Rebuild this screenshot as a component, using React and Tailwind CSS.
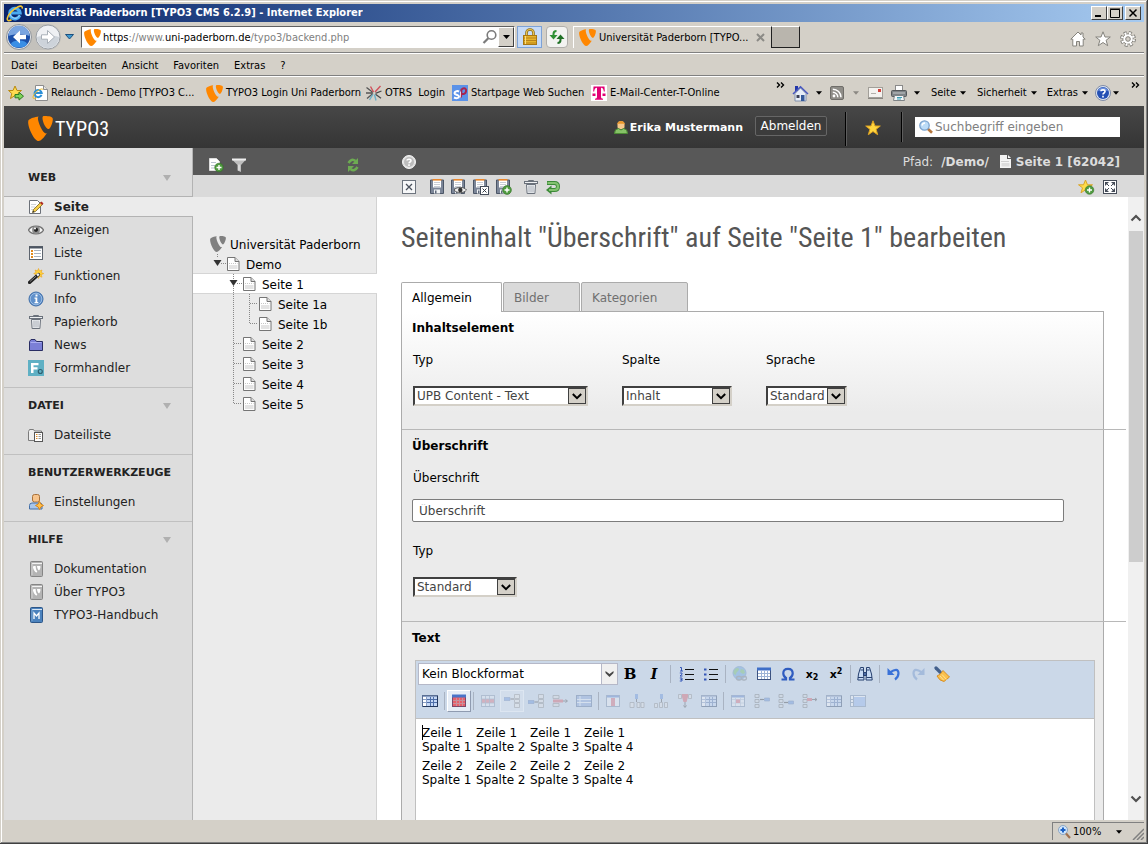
import React from "react";
import { SiTypo3 } from "react-icons/si";

/* ---------- shared helpers ---------- */

function Svg({ w = 16, h = 16, box, className = "", children }) {
  return (
    <svg
      width={w}
      height={h}
      viewBox={box || `0 0 ${w} ${h}`}
      fill="none"
      aria-hidden="true"
      className={"block shrink-0 " + className}
    >
      {children}
    </svg>
  );
}

function Caret({ color = "#000", w = 7, className = "" }) {
  return (
    <Svg w={w} h={4} box="0 0 7 4" className={className}>
      <path d="M0 0h7L3.5 4z" fill={color} />
    </Svg>
  );
}

/* ---------- browser icons ---------- */

function IeLogo({ s = 18 }) {
  return (
    <Svg w={s} h={s} box="0 0 18 18">
      <path
        d="M13.8 11.4A5.2 5.2 0 1 1 14.1 9H5.2"
        stroke="#49aaf0"
        strokeWidth="3.2"
      />
      <path
        d="M13.6 11.2A5 5 0 0 1 4 9.5"
        stroke="#a8defc"
        strokeWidth="1"
      />
      <path
        d="M16.3 4.6c.4-2.6-1.300-3.200-4.600-1.700C7 5 2 10.500 1.300 14.300c-.5 2.600 1.200 3 4.200 1.500"
        stroke="#f5c731"
        strokeWidth="1.600"
      />
    </Svg>
  );
}

function BackButton() {
  return (
    <Svg w={26} h={26}>
      <circle cx="13" cy="13" r="12.500" fill="#e4e6ea" stroke="#8f9499" />
      <circle cx="13" cy="13" r="11" fill="#1b4fa8" />
      <path d="M2.500 12a10.500 10.500 0 0 1 21 0c-5-2.500-16-2.500-21 0z" fill="#7aa5e0" />
      <ellipse cx="13" cy="20" rx="8" ry="3.500" fill="#3a8fe6" />
      <path d="M14 6.500 7 13l7 6.500v-4.300h6v-4.400h-6z" fill="#fff" />
    </Svg>
  );
}

function ForwardButton() {
  return (
    <Svg w={26} h={26}>
      <circle cx="13" cy="13" r="12" fill="#eef0f3" stroke="#9ba0a6" />
      <path d="M2 13a11 11 0 0 0 22 0c-6-2-16-2-22 0z" fill="#cdd3da" />
      <path
        d="m12.500 6.500 7 6.500-7 6.500v-4.300h-6v-4.400h6z"
        fill="#fff"
        stroke="#a9b0b8"
      />
    </Svg>
  );
}

function Lens() {
  return (
    <Svg w={16} h={16}>
      <circle cx="9.500" cy="6" r="4.300" stroke="#7b7b7b" strokeWidth="1.600" />
      <path d="M6.300 9.200 1.500 14" stroke="#7b7b7b" strokeWidth="2.200" />
    </Svg>
  );
}

function Padlock() {
  return (
    <Svg w={16} h={18}>
      <path d="M4.500 8V5a3.500 3.500 0 0 1 7 0v3" stroke="#8a6a14" strokeWidth="2.600" />
      <path d="M4.500 8V5a3.500 3.500 0 0 1 7 0v3" stroke="#e8c452" strokeWidth="1.200" />
      <rect x="1.500" y="7.500" width="13" height="9" fill="#e6b32c" stroke="#a87712" />
      <path d="M2 10h12M2 12.500h12M2 15h12" stroke="#b98319" />
      <path d="M3.500 8v8" stroke="#f8de83" />
    </Svg>
  );
}

function Reload() {
  return (
    <Svg w={16} h={16}>
      <path d="M7.500 2Q4.500 2 4.500 5v2" stroke="#2f9034" strokeWidth="2" />
      <path d="M.5 6h8l-4 4.500z" fill="#2f9034" />
      <path d="M8.500 14Q11.500 14 11.500 11V9" stroke="#1f7025" strokeWidth="2" />
      <path d="M7.500 10h8l-4-4.500z" fill="#1f7025" />
    </Svg>
  );
}

function HomeOutline() {
  return (
    <Svg w={16} h={16}>
      <path
        d="M8 1 .8 8.200h2V15h3.700v-4.500h3V15h3.700V8.200h2L13 6V2h-2v2z"
        fill="#fff"
        stroke="#85837d"
      />
    </Svg>
  );
}

function StarShape({ fill = "#fff", stroke = "#85837d", s = 16 }) {
  return (
    <Svg w={s} h={s} box="0 0 16 16">
      <path
        d="M8 .8 10 6h5.300l-4.200 3.300 1.600 5.400L8 11.500l-4.700 3.200 1.600-5.400L.7 6H6z"
        fill={fill}
        stroke={stroke}
      />
    </Svg>
  );
}

function GearOutline() {
  return (
    <Svg w={16} h={16}>
      <circle cx="8" cy="8" r="6" stroke="#85837d" strokeWidth="4" strokeDasharray="2.800 1.912" />
      <circle cx="8" cy="8" r="5.200" fill="#fff" stroke="#85837d" strokeWidth="1" />
      <circle cx="8" cy="8" r="5.800" stroke="#fff" strokeWidth="2.400" strokeDasharray="1.800 2.755" strokeDashoffset="-.4" />
      <circle cx="8" cy="8" r="2.300" fill="#d4d0c8" stroke="#85837d" />
    </Svg>
  );
}

function FavAdd() {
  return (
    <Svg w={16} h={16}>
      <path d="M7 1l2 4.500h4.500L10 8.500l1.500 5L7 10.500l-4.500 3 1.300-5L.5 5.500H5z" fill="#ffdc50" stroke="#b98a12" />
      <path d="M7 9.500h4V7.300l4.500 3.900-4.500 3.900v-2.300H7z" fill="#7fd35a" stroke="#2d7d22" />
    </Svg>
  );
}

function IePage() {
  return (
    <Svg w={16} h={16}>
      <path d="M3.500.5h8l4 4v11h-12z" fill="#fff" stroke="#8d8d8d" />
      <path d="M11.500.5v4h4" fill="#e4e4e4" stroke="#8d8d8d" />
      <path d="M9.500 9.800A3.600 3.600 0 1 1 9.700 8H3" stroke="#2b8fd8" strokeWidth="2" />
      <path d="M11 4.500C10 2 1 8 1 12.500c0 1.500 2 1.300 3.500.3" stroke="#f0bd2a" />
    </Svg>
  );
}

function OtrsIcon() {
  return (
    <Svg w={16} h={16}>
      <path d="M.5 2.500 7 7.500M1 13.500l6-5M0 8h6" stroke="#555" strokeWidth="1.300" />
      <path d="M4.500 1.500 7.500 7M9 7l5.500-6" stroke="#d0505a" strokeWidth="1.400" />
      <path d="M9.500 8.300 15.500 6M9.500 9.300l5.500 4" stroke="#4a4a4a" strokeWidth="1.300" />
      <path d="M8.500 9.500l1.500 6M6.800 9.500 3.500 15" stroke="#6ab0c8" strokeWidth="1.400" />
    </Svg>
  );
}

function StartpageIcon() {
  return (
    <Svg w={16} h={16}>
      <rect width="16" height="16" fill="#5b92e8" />
      <path d="M7 6.500C5 5.500 2.500 6.500 2.500 8.200S7 9.500 7 11.500s-3 2-5 1" stroke="#fff" strokeWidth="2" />
      <path d="M9 12.500 9.500 4.500C13 2 14.500 4 14 6.500S11 9.500 9.500 8.800" stroke="#a8254f" strokeWidth="2" />
      <path d="M8.500 12.500v-6" stroke="#fff" strokeWidth=".8" />
    </Svg>
  );
}

function TelekomIcon() {
  return (
    <Svg w={16} h={16}>
      <rect width="16" height="16" fill="#fff" />
      <path
        d="M2.500 1.500h11l.3 5h-1c-.2-2.300-1-3.500-2.800-3.700v8.700c0 1.600.5 2.200 2 2.300v.9H4v-.9c1.500-.1 2-.7 2-2.300V2.800C4.200 3 3.400 4.200 3.200 6.500h-1z"
        fill="#e20074"
      />
      <path d="M1.500 8.500h3v2.500h-3zM11.500 8.500h3v2.500h-3z" fill="#e20074" />
    </Svg>
  );
}

function HomeBlue() {
  return (
    <Svg w={17} h={17}>
      <rect x="3" y="1" width="3" height="5" fill="#2336a8" />
      <path d="M3 8.500V16h11V8.500L8.500 3z" fill="#e6edf7" stroke="#8190ac" />
      <path d="M1 9 8.500 1.800 16 9" stroke="#4858c0" strokeWidth="1.500" />
      <rect x="9" y="10" width="3.500" height="6" fill="#34599a" />
      <rect x="4.500" y="10" width="3" height="3" fill="#3a3f55" />
    </Svg>
  );
}

function RssIcon() {
  return (
    <Svg w={14} h={14}>
      <rect x=".5" y=".5" width="13" height="13" rx="1.500" fill="#8f8d88" stroke="#6f6d69" />
      <circle cx="4" cy="10" r="1.400" fill="#fff" />
      <path d="M2.800 6.300a5 5 0 0 1 5 5M2.800 3.200a8.200 8.200 0 0 1 8.200 8.100" stroke="#fff" strokeWidth="1.500" />
    </Svg>
  );
}

function MailIcon() {
  return (
    <Svg w={15} h={12}>
      <rect x=".5" y=".5" width="14" height="10" fill="#f4f2ef" stroke="#a29f99" />
      <path d="M0 11.500h15" stroke="#8b8883" />
      <rect x="10" y="2" width="3" height="3" fill="#d2413a" />
      <path d="M3 6.500h5" stroke="#b3b0ab" />
    </Svg>
  );
}

function PrinterIcon() {
  return (
    <Svg w={16} h={16}>
      <rect x="4.500" y=".5" width="7" height="6" fill="#fdfdfd" stroke="#8a8a8a" />
      <rect x=".5" y="5.500" width="15" height="6" rx="1" fill="#7e8386" stroke="#54585b" />
      <path d="M2 8h12" stroke="#c4c8ca" />
      <path d="M3.500 10.500h9l1 5h-11z" fill="#f1f6f8" stroke="#7e8386" />
      <path d="M6 12.500h5M6 14h4" stroke="#3d9fb4" />
    </Svg>
  );
}

function HelpBlue() {
  return (
    <Svg w={16} h={16}>
      <circle cx="8" cy="8" r="7.500" fill="#dfe6f2" stroke="#7e8ba6" />
      <circle cx="8" cy="8" r="6" fill="#2450b4" />
      <path d="M3 6a5.300 5.300 0 0 1 10 0c-3-1-7-1-10 0z" fill="#6f92dc" />
      <path d="M6 6.300C6 4.500 10 4.300 10 6.500 10 8 8 8 8 9.500M8 10.800v1.700" stroke="#fff" strokeWidth="1.600" />
    </Svg>
  );
}

function ZoomIcon() {
  return (
    <Svg w={13} h={14}>
      <circle cx="5" cy="5" r="4.500" fill="#cfe4fb" stroke="#8aa5c4" />
      <path d="M5 2.500v5M2.500 5h5" stroke="#1d62c4" strokeWidth="2" />
      <path d="m8 8.500 4 4.500" stroke="#a2714f" strokeWidth="2.200" />
    </Svg>
  );
}

/* ---------- backend icons ---------- */

function PageEdit() {
  return (
    <Svg w={16} h={16}>
      <path d="M1.500 1.500h8l3 3v10h-11z" fill="#fff" stroke="#6b7078" />
      <path d="M3 5.500h5M3 8h4M3 10.500h3" stroke="#cfd3d8" />
      <path d="m5.500 10.500 7-7 2 2-7 7-3 1z" fill="#f6cf4a" stroke="#7e6420" strokeWidth=".8" />
      <path d="m12 4 1.500-1.500 2 2L14 6z" fill="#b02a25" />
      <path d="m4.500 13.500.6-2 1.500 1.400z" fill="#333" />
    </Svg>
  );
}

function Eye() {
  return (
    <Svg w={16} h={12}>
      <path d="M.5 6C3 1 13 1 15.500 6 13 11 3 11 .5 6z" fill="#f2f2f2" stroke="#727272" strokeWidth="1.300" />
      <circle cx="8" cy="6" r="3.900" fill="#8d8d8d" />
      <circle cx="8" cy="5.800" r="2.100" fill="#222" />
      <circle cx="7" cy="4.500" r="1" fill="#fff" />
    </Svg>
  );
}

function ListIcon() {
  return (
    <Svg w={16} h={16}>
      <rect x="1.500" y="1.500" width="13" height="13" fill="#fff" stroke="#5d646e" />
      <path d="M1 2.500h14" stroke="#4d5663" strokeWidth="2" />
      <path d="M3 6h2M3 9h2M3 12h2" stroke="#e08a20" strokeWidth="2" />
      <path d="M6 5.500h7M6 8.500h7M6 11.500h7" stroke="#a9b3c0" />
    </Svg>
  );
}

function Wand() {
  return (
    <Svg w={16} h={16}>
      <path d="m10.500.5 1 2.500 2.500-1-.8 2.500 2.500 1-2.500 1.200.8 2.500-2.500-1-1 2.300-1.200-2.500L7 9l1-2.300-2.300-1.200L8 4.500 7 2l2.500 1z" fill="#ffd23c" stroke="#eda51c" strokeWidth=".6" />
      <path d="m1.500 14.500 9-8" stroke="#222" strokeWidth="3.200" strokeLinecap="round" />
      <path d="m2 13.500 6-5.300" stroke="#8d8d8d" strokeWidth=".9" />
      <path d="m9 7.500 1.800-1.600" stroke="#eee" strokeWidth="2.400" />
    </Svg>
  );
}

function InfoIcon() {
  return (
    <Svg w={16} h={16}>
      <circle cx="8" cy="8" r="7" fill="#5f90cb" stroke="#3c6ca8" />
      <circle cx="8" cy="8" r="5.800" stroke="#a9c8ea" strokeWidth=".8" />
      <path d="M7.500 3.500h2v2h-2zM6.500 6.500h2.800v4.500h1v1.300H6.500V11h1V7.800h-1z" fill="#fff" />
    </Svg>
  );
}

function Trash({ s = 16 }) {
  return (
    <Svg w={s} h={s} box="0 0 16 16">
      <path d="M5.500 2.500v-1h5v1" stroke="#6a717b" />
      <rect x="1.500" y="2.500" width="13" height="2" fill="#eef0f2" stroke="#6a717b" />
      <path d="M3.500 5.500h9l-.6 9H4.100z" fill="#f3f5f8" stroke="#6a717b" />
      <path d="M6 6.500v7M8 6.500v7M10 6.500v7" stroke="#8b929c" strokeWidth=".8" />
    </Svg>
  );
}

function Folder() {
  return (
    <Svg w={16} h={16}>
      <path d="M1.500 13.500V4.500L3 2.500h4l1.500 2h6v9z" fill="#7b7fd6" stroke="#292d63" />
      <path d="M2.500 5.500h11" stroke="#a9adf0" />
    </Svg>
  );
}

function FormIcon() {
  return (
    <Svg w={16} h={16}>
      <rect width="16" height="16" fill="#5fb0c4" />
      <path d="M3 3h7.500v2.200H5.500v2h4v2.200h-4V13H3z" fill="#fff" />
      <circle cx="12.300" cy="11.500" r="2" stroke="#2f6070" strokeWidth="1.200" />
    </Svg>
  );
}

function FileListIcon() {
  return (
    <Svg w={16} h={16}>
      <path d="M.5 13.500V4.500l1-2h4l1 1.500h7v9.500z" fill="#efefef" stroke="#7b7b7b" />
      <rect x="6.500" y="5.500" width="8" height="9" fill="#fff" stroke="#565656" />
      <path d="M8 7.500h1.500M8 9.500h1.500M8 11.500h1.500" stroke="#e08a20" />
      <path d="M10.500 7.500H13M10.500 9.500H13M10.500 11.500H13" stroke="#9a9a9a" />
    </Svg>
  );
}

function UserConfig() {
  return (
    <Svg w={16} h={16}>
      <rect x="4.500" y=".5" width="7" height="7.500" rx="2" fill="#f7c48c" stroke="#a8713a" />
      <path d="M1.500 15V11.500q0-2.500 2.500-2.500h8q2 0 2 2V15z" fill="#a9c6ea" stroke="#4470a8" />
      <path d="m11.500 7.500 1.400 2.600 2.600 1.400-2.600 1.400-1.400 2.600-1.400-2.600-2.600-1.400 2.600-1.400z" fill="#ffc04a" stroke="#d9861a" />
    </Svg>
  );
}

function Book({ blue }) {
  return (
    <Svg w={16} h={16}>
      <rect x="2.500" y=".5" width="12" height="15" rx="1" fill={blue ? "#4b82bd" : "#b4b4b4"} stroke={blue ? "#2d5688" : "#858585"} />
      <path d="M4 2.500h10" stroke={blue ? "#d8e6f4" : "#f4f4f4"} />
      <path d="M4 2.500V14" stroke={blue ? "#7fa9d4" : "#d5d5d5"} />
      {blue ? (
        <path d="M6 12V6l2.500 3L11 6v6" stroke="#fff" strokeWidth="1.300" />
      ) : (
        <path d="M5 5.500c1.500-.7 2.500-.5 2.800 0-.2 2 .6 4 1.500 5-.3.8-.7 1-1.200 1C6.600 10.700 4.800 7.500 5 5.500zM9 5h3.300c.5 1.700-.4 3.600-1.300 4.600C9.800 8.500 9 6.500 9 5z" fill="#fff" />
      )}
    </Svg>
  );
}

function PageAdd() {
  return (
    <Svg w={16} h={16}>
      <path d="M1.500 1.500h7l3 3v9h-10z" fill="#fff" stroke="#dcdcdc" />
      <path d="M3 5.500h5M3 8.500h4M3 11h3" stroke="#b9c2d0" />
      <circle cx="11" cy="10.500" r="4.300" fill="#4f9a3f" stroke="#2f6f24" strokeWidth=".6" />
      <path d="M11 8v5M8.500 10.500h5" stroke="#fff" strokeWidth="1.400" />
    </Svg>
  );
}

function Funnel() {
  return (
    <Svg w={14} h={16}>
      <path d="M0 2.500h14L9 8v7L5.500 13.500V8z" fill="#bdbdbd" />
      <path d="M0 1.500h14v2H0z" fill="#efefef" />
      <path d="M7 7.500v6" stroke="#f4f4f4" />
    </Svg>
  );
}

function RefreshGreen() {
  return (
    <Svg w={12} h={16}>
      <path d="M1.500 6Q4.500.8 8.500 4" stroke="#6dab52" strokeWidth="2.600" />
      <path d="M11 1v6H5z" fill="#6dab52" />
      <path d="M10.500 10Q7.500 15.200 3.500 12" stroke="#6dab52" strokeWidth="2.600" />
      <path d="M1 15V9h6z" fill="#6dab52" />
    </Svg>
  );
}

function HelpGrey() {
  return (
    <Svg w={14} h={14}>
      <circle cx="7" cy="7" r="6.500" fill="#e2e2e2" stroke="#f3f3f3" />
      <circle cx="7" cy="7" r="5" fill="#bcbcbc" />
      <path d="M5 5.600C5 3.700 9 3.700 9 5.700 9 7 7 7 7 8.300M7 9.300v1.600" stroke="#fff" strokeWidth="1.500" />
    </Svg>
  );
}

function CloseBox() {
  return (
    <Svg w={14} h={14}>
      <rect x=".5" y=".5" width="13" height="13" fill="#f6f7f8" stroke="#6d747e" />
      <path d="m4 4 6 6M10 4l-6 6" stroke="#4a515c" strokeWidth="1.300" />
    </Svg>
  );
}

function Save({ kind }) {
  return (
    <Svg w={16} h={16}>
      <path d="M.5 1v13.500h13V1z" fill="#7c8698" stroke="#4c5667" />
      <path d="M3 .5h8v8H3z" fill="#fff" />
      <path d="M2.500.8h9" stroke="#e9862a" strokeWidth="1.600" />
      <path d="M4 3.500h6M4 5.500h6M4 7.500h6" stroke="#bcc2cb" strokeWidth=".8" />
      <path d="M4 10.500h6v4H4z" fill="#f1f3f5" />
      <path d="M5 11.500h1.500v3H5z" fill="#5d6779" />
      {kind === "view" && (
        <>
          <path d="M3 11C5.500 7.500 13 7.500 15.500 11 13 14.500 5.500 14.500 3 11z" fill="#eee" stroke="#5e5e5e" />
          <circle cx="9.300" cy="11" r="2.200" fill="#333" />
        </>
      )}
      {kind === "close" && (
        <>
          <rect x="7.500" y="7.500" width="8" height="8" fill="#fff" stroke="#444c59" />
          <path d="m9.500 9.500 4 4M13.500 9.500l-4 4" stroke="#333a45" />
        </>
      )}
      {kind === "new" && (
        <>
          <circle cx="11" cy="11" r="4.400" fill="#4f9a3f" stroke="#347526" strokeWidth=".6" />
          <path d="M11 8.500v5M8.500 11h5" stroke="#fff" strokeWidth="1.400" />
        </>
      )}
    </Svg>
  );
}

function UndoGreen() {
  return (
    <Svg w={14} h={15}>
      <path d="M1 3h7.500Q12 3 12 6.500T8.500 10H4" stroke="#3c8a38" strokeWidth="4" />
      <path d="M5.500 5.500v9L0 10z" fill="#3c8a38" />
      <path d="M1.500 3h7Q12 3 12 6.500T8.500 10H3" stroke="#83c270" strokeWidth="2.200" />
    </Svg>
  );
}

function StarAdd() {
  return (
    <Svg w={17} h={16}>
      <path d="M7.500 1l2 4.800h5l-4 3 1.500 5-4.500-3-4.500 3 1.500-5-4-3h5z" fill="#ffdc4a" stroke="#d9a52a" />
      <circle cx="11.500" cy="11" r="4.300" fill="#4f9a3f" stroke="#347526" strokeWidth=".6" />
      <path d="M11.500 8.500v5M9 11h5" stroke="#fff" strokeWidth="1.400" />
    </Svg>
  );
}

function Expand() {
  return (
    <Svg w={14} h={14}>
      <rect x=".5" y=".5" width="13" height="13" fill="#fff" stroke="#454c58" />
      <path d="M2 6V2h4zM12 6V2H8zM2 8v4h4zM12 8v4H8z" fill="#444b57" />
      <path d="m3.500 3.500 2.500 2.500M10.500 3.500 8 6M3.500 10.500 6 8M10.500 10.500 8 8" stroke="#444b57" />
    </Svg>
  );
}

function UserGreen() {
  return (
    <Svg w={14} h={15}>
      <path d="M3.500 4c0-4 7-4 7 0v3c0 3-7 3-7 0z" fill="#f7c88d" />
      <path d="M3 5c0-5.500 8-5.500 8 0L10 3.800H4z" fill="#e9962a" />
      <path d="M.5 13.500q0-4.500 4-5L7 10l2.500-1.500q4 .5 4 5z" fill="#86c267" stroke="#4d8c35" />
    </Svg>
  );
}

function SearchGlass() {
  return (
    <Svg w={14} h={14}>
      <path d="m8.500 8.500 4.500 4.300" stroke="#b4763c" strokeWidth="2.600" />
      <circle cx="5.500" cy="5.500" r="4.700" fill="#bcdcf8" stroke="#7ba2cd" strokeWidth="1.300" />
      <path d="M3 5.500Q3.500 3 6 3" stroke="#fff" strokeWidth="1.300" />
    </Svg>
  );
}

function PageIcon() {
  return (
    <Svg w={13} h={14}>
      <path d="M.5.5h7.500l4 4v9H.5z" fill="#fff" stroke="#757575" />
      <path d="M8 .5v4h4" fill="#ddd" stroke="#757575" />
      <path d="M2 6.500h8.500" stroke="#c9c9c9" strokeDasharray="1 1" />
      <path d="M2 8h8.500v4H2z" fill="#e4e4e4" />
    </Svg>
  );
}

function PageWhite() {
  return (
    <Svg w={11} h={13}>
      <path d="M0 0h7v4h4v9H0z" fill="#f4f4f4" />
      <path d="M8 0l3 3H8z" fill="#f4f4f4" />
      <path d="M1.500 6.500h8" stroke="#aaa" strokeDasharray="1 1" />
      <path d="M1.500 8h8v3.500h-8z" fill="#dcdcdc" />
    </Svg>
  );
}

/* ---------- editor icons ---------- */

function Grid({ head = "#3f6fc8", body = "#fff", line = "#9db3d6", frame = "#3d5380" }) {
  return (
    <Svg w={16} h={16}>
      <rect x="1.500" y="2.500" width="13" height="11" fill={body} stroke={frame} />
      <path d="M1 3h14" stroke={head} strokeWidth="3" />
      <path d="M2 7.500h12M2 10.500h12M5.500 5v8M8.500 5v8M11.500 5v8" stroke={line} />
    </Svg>
  );
}

function SideGrid() {
  return (
    <Svg w={16} h={16}>
      <rect x=".5" y="2.500" width="15" height="11" fill="#fff" stroke="#5a6f94" />
      <path d="M5 3h10v10H5z" fill="#c4d7f5" />
      <path d="M5 6.500h10M5 9.500h10M8.500 3v10M11.500 3v10" stroke="#4d6ea8" />
      <path d="M4.500 3v10M1 6.500h3M1 9.500h3M1 3.500h14" stroke="#8a9fc4" />
      <path d="M15.500 3v11M1 13.500h15" stroke="#23375c" />
    </Svg>
  );
}

function RowProps() {
  return (
    <Svg w={16} h={16}>
      <rect x="1.500" y="2.500" width="13" height="11" fill="#e8edf5" stroke="#8090a8" />
      <path d="M2 6h12v4H2z" fill="#e06a75" />
      <path d="M5.500 3v10M9.500 3v10M2 6h12M2 10h12" stroke="#8090a8" strokeWidth=".8" />
    </Svg>
  );
}

function RowInsert({ low }) {
  return (
    <Svg w={16} h={16}>
      <path d={low ? "M0 7.500h6v3H0z" : "M0 4.500h6v3H0z"} fill="#5a8ad8" stroke="#44639c" strokeWidth=".6" />
      <path d={low ? "M6.500 9h3.500" : "M6.500 6h3.500"} stroke="#444" strokeWidth="1.200" />
      <path d="M10.500 1.500h5v4h-5zM10.500 6.500h5v3h-5zM10.500 10.500h5v4h-5z" fill="#e3e3e3" stroke="#777" strokeWidth=".8" />
    </Svg>
  );
}

function RowDelete() {
  return (
    <Svg w={16} h={16}>
      <path d="M1 2.500h6v3H1zM1 10.500h6v3H1z" fill="#ddd" stroke="#777" strokeWidth=".8" />
      <path d="M1 6.500h10v3H1z" fill="#d6505c" />
      <path d="M11 8h4M13.500 6.500 15.500 8l-2 1.500" stroke="#444" />
    </Svg>
  );
}

function RowSplit() {
  return (
    <Svg w={16} h={16}>
      <rect x=".5" y="2.500" width="15" height="11" fill="#7f9fd6" stroke="#4a6490" />
      <path d="M4 3v10M1 6.500h14M1 9.500h14" stroke="#e9f0fa" />
    </Svg>
  );
}

function ColProps() {
  return (
    <Svg w={16} h={16}>
      <rect x="1.500" y="2.500" width="13" height="11" fill="#f1f4f9" stroke="#6d80a0" />
      <path d="M2 3.500h12" stroke="#4e79c8" strokeWidth="2" />
      <path d="M6 5h4v8H6z" fill="#d8606c" />
    </Svg>
  );
}

function CellProps() {
  return (
    <Svg w={16} h={16}>
      <rect x="1.500" y="2.500" width="13" height="11" fill="#f1f4f9" stroke="#6d80a0" />
      <path d="M2 3.500h12" stroke="#4e79c8" strokeWidth="2" />
      <path d="M2 6.500h12M2 10h12M5.500 5v8M10.500 5v8" stroke="#a9b6cb" strokeWidth=".8" />
      <path d="M6 6.500h4V10H6z" fill="#d8606c" />
    </Svg>
  );
}

function ColInsert({ dx = 0 }) {
  return (
    <Svg w={16} h={16}>
      <path d={dx ? "M7 1h3v5H7z" : "M6 1h3v5H6z"} fill="#5a8ad8" />
      <path d={dx ? "M8.500 6v3" : "M7.500 6v3"} stroke="#444" />
      <path
        d={dx ? "M1.500 10.500h3v4h-3zM6.500 9.500h3v5h-3zM11.500 9.500h3v5h-3z" : "M1 9.500h4v5H1zM8 9.500h3v5H8zM12 9.500h3v5h-3z"}
        fill="#e6e6e6"
        stroke="#777"
        strokeWidth=".8"
      />
    </Svg>
  );
}

function ColDelete() {
  return (
    <Svg w={16} h={16}>
      <path d="M1.500 1.500h3v4h-3zM11.500 1.500h3v4h-3z" fill="#e6e6e6" stroke="#777" strokeWidth=".8" />
      <path d="M5 1h6v3L9.500 9h-3L5 4z" fill="#d6505c" />
      <path d="M8 9v5M6.500 12.500 8 14.500l1.500-2" stroke="#444" />
    </Svg>
  );
}

function CellOp({ mode }) {
  const y = mode === 1 ? 9.5 : 6.5;
  return (
    <Svg w={16} h={16}>
      <path d="M1 1.500h4v3H1zM1 6.500h4v3H1zM1 11.500h4v3H1z" fill="#d4d8de" stroke="#666" strokeWidth=".8" />
      {mode === 2 ? (
        <>
          <path d="M5 5h5v3H5z" fill="#d6505c" />
          <path d="M10 6.500h5M13 5l2 1.500L13 8" stroke="#444" />
        </>
      ) : (
        <>
          <path d={`M6 ${y}h4`} stroke="#333" strokeWidth="1.200" />
          <path d={`M10.500 ${y - 1.5}h5v3h-5z`} fill="#5a8ad8" stroke="#44639c" strokeWidth=".6" />
        </>
      )}
    </Svg>
  );
}

function MergeCells() {
  return (
    <Svg w={16} h={16}>
      <rect x=".5" y="2.500" width="15" height="11" fill="#fff" stroke="#6d80a0" />
      <path d="M4 4h11v9H4z" fill="#8fb1ee" />
      <path d="M3.500 3v10M1 6.500h2M1 9.500h2" stroke="#6d80a0" />
    </Svg>
  );
}

function ListLines({ ordered }) {
  return (
    <Svg w={16} h={16}>
      <path d="M6 3.500h9M6 8.500h9M6 13.500h9" stroke="#111" strokeWidth="1.200" />
      {ordered ? (
        <path
          d="M1 1.500h1.500V5M1 5h3M.8 7H3v1.300L1 10h2.500M.8 12H3v1.500H1.500M3 13.500V15H.8"
          stroke="#3557b8"
        />
      ) : (
        <path d="M1 2.500h2.500v2H1zM1 7.500h2.500v2H1zM1 12.500h2.500v2H1z" fill="#3557b8" />
      )}
    </Svg>
  );
}

function GlobeLink() {
  return (
    <Svg w={16} h={16}>
      <circle cx="7.500" cy="7" r="6.500" fill="#5a9bdc" stroke="#5b86b8" />
      <path d="M3 3c2-1.500 4-1 4 .5S4 6 4 8 2 8 1.500 7 2 4 3 3zM9 3l3 1 1 3-2 1-3-2z" fill="#62b85a" />
      <rect x="4.500" y="10.500" width="5" height="3.500" rx="1.700" stroke="#6e7379" strokeWidth="1.300" />
      <rect x="9.500" y="10.500" width="5" height="3.500" rx="1.700" stroke="#6e7379" strokeWidth="1.300" />
    </Svg>
  );
}

function Omega() {
  return (
    <Svg w={16} h={16}>
      <path
        d="M1.500 13.500H6V12Q3.300 10.500 3.300 7.300 3.300 2.800 8 2.800t4.700 4.500q0 3.200-2.700 4.700v1.500h4.500"
        stroke="#2f5cc0"
        strokeWidth="2.200"
      />
    </Svg>
  );
}

function Binoculars() {
  return (
    <Svg w={16} h={16}>
      <path d="M3.500 1.500h3v5l.5 7.500H.8L1.500 8zM9.500 1.500h3l2 6.500.700 6H9l.5-7.500z" fill="#c7daf4" stroke="#27406f" />
      <path d="M6.500 6.500h3v3h-3z" fill="#4a6aa4" stroke="#27406f" />
      <path d="M1 11.500h5.500M9.500 11.500H15M3.500 4h3M9.500 4h3" stroke="#27406f" />
    </Svg>
  );
}

function Arrow({ flip, faded }) {
  return (
    <Svg w={16} h={16} className={faded ? "opacity-50" : ""}>
      <g transform={flip ? "translate(16 0) scale(-1 1)" : undefined}>
        <path d="M4 6.500Q12 1 12.500 7q0 4-3.500 6.500" stroke={faded ? "#7f9fd0" : "#3a72d8"} strokeWidth="2.200" />
        <path d="M1.500 2v7h7z" fill={faded ? "#7f9fd0" : "#3a72d8"} />
      </g>
    </Svg>
  );
}

function Broom() {
  return (
    <Svg w={16} h={16}>
      <path d="m2 2 4 4" stroke="#43608c" strokeWidth="3.200" strokeLinecap="round" />
      <path d="M9 4.500 15.500 11 10 15.500q-4.500-.5-7-5.500 3.500-1 6-5.500z" fill="#fbc04c" stroke="#d4891d" strokeWidth=".9" />
      <path d="m8 8.500 4.500 5M6 10l3.500 4" stroke="#fde29a" />
    </Svg>
  );
}

/* ---------- small building blocks ---------- */

function ChromeLine() {
  return <div className="border-t border-b border-t-[#808080] border-b-white" />;
}

function WinButton({ label, children, className = "" }) {
  return (
    <button
      type="button"
      aria-label={label}
      className={
        "flex h-[14px] w-4 items-center justify-center border border-t-white border-l-white border-r-[#404040] border-b-[#404040] bg-[#d4d0c8] " +
        className
      }
    >
      {children}
    </button>
  );
}

function Favorite({ icon, children, className = "" }) {
  return (
    <a href="#" className={"flex items-center gap-[3px] whitespace-nowrap " + className}>
      {icon}
      {children}
    </a>
  );
}

function MenuHead({ children }) {
  return (
    <h2>
      <button
        type="button"
        className="relative block h-[35px] w-full pt-px pl-6 text-left text-[11px] font-bold text-[#222]"
      >
        <span className="absolute top-[15px] right-[21px]">
          <Svg w={8} h={6}>
            <path d="M0 0h8L4 6z" fill="#b0b0b0" />
          </Svg>
        </span>
        <span className="relative">{children}</span>
      </button>
    </h2>
  );
}

function MenuItem({ icon, children }) {
  return (
    <li>
      <a href="#" className="flex h-[23px] items-center pl-6 text-[12px] text-[#222]">
        <span className="flex w-[26px]">{icon}</span>
        {children}
      </a>
    </li>
  );
}

function TreeLine({ kind }) {
  const dots = { stroke: "#888", strokeDasharray: "1 1" };
  return (
    <Svg w={18} h={20}>
      {kind === "pass" && <path d="M8.500 0v20" {...dots} />}
      {kind === "tee" && <path d="M8.500 0v20M9 9.500h8" {...dots} />}
      {kind === "end" && <path d="M8.500 0v9M9 9.500h8" {...dots} />}
      {(kind === "openTop" || kind === "open") && (
        <>
          <path d={kind === "open" ? "M8.500 0v20M12 9.500h5" : "M8.500 0v4M12 9.500h5"} {...dots} />
          <path d="M4.500 6h8l-4 6z" fill="#333" />
        </>
      )}
    </Svg>
  );
}

function TreeRow({ lines, children, selected }) {
  return (
    <li
      className={
        "flex h-5 items-center pl-4 " +
        (selected ? "-mr-px bg-white shadow-[0_-1px_0_#d5d5d5,inset_0_-1px_0_#d5d5d5]" : "")
      }
    >
      {lines.map((kind, i) => (
        <span key={i} className={i < lines.length - 1 ? "w-4" : "w-[18px]"}>
          <TreeLine kind={kind} />
        </span>
      ))}
      <PageIcon />
      <a href="#" className="ml-[6px] pt-px">
        {children}
      </a>
    </li>
  );
}

function WinSelect({ id, value, className = "" }) {
  return (
    <div
      className={
        "relative h-5 border-t-2 border-l-2 border-r-2 border-b-2 border-t-[#404040] border-l-[#404040] border-r-[#d4d0c8] border-b-[#d4d0c8] bg-white " +
        className
      }
    >
      <select
        id={id}
        defaultValue={value}
        className="block h-4 w-full appearance-none bg-white pl-[2px] text-[12px] leading-4 text-[#444] outline-none"
      >
        <option value={value}>{value}</option>
      </select>
      <span className="pointer-events-none absolute inset-y-0 right-0 flex w-[18px] items-center justify-center border border-[#404040] bg-[#d4d0c8]">
        <Svg w={10} h={7}>
          <path d="m.8 1 4.200 4.200L9.200 1" stroke="#000" strokeWidth="2" />
        </Svg>
      </span>
    </div>
  );
}

function Tool({ label, faded, active, children }) {
  return (
    <button
      type="button"
      aria-label={label}
      title={label}
      className={
        "flex h-[22px] w-6 shrink-0 items-center justify-center " +
        (active ? "border border-white border-r-[#8f9bb0] border-b-[#8f9bb0] bg-[#e6edf6]" : "")
      }
    >
      <span className={faded ? "opacity-35" : ""}>{children}</span>
    </button>
  );
}

function Sep({ className = "w-[5px]" }) {
  return (
    <span className={"flex h-[18px] shrink-0 justify-center " + className}>
      <span className="w-px bg-[#a9b3c2]" />
    </span>
  );
}

function IconButton({ label, children, className = "" }) {
  return (
    <button type="button" aria-label={label} title={label} className={"shrink-0 " + className}>
      {children}
    </button>
  );
}

function SectionTitle({ children }) {
  return <h2 className="pt-2 pl-[10px] text-[12px] leading-4 font-bold">{children}</h2>;
}

function SectionRule() {
  return <div className="-mr-[23px] h-px bg-[#b8b8b8]" />;
}

/* ---------- page areas ---------- */

function TitleBar() {
  return (
    <div className="flex h-[18px] items-center bg-gradient-to-r from-[#0a246a] to-[#a6caf0] pr-[3px] pl-[2px] text-[11px] font-bold text-white">
      <IeLogo />
      <span className="truncate">Universität Paderborn [TYPO3 CMS 6.2.9] - Internet Explorer</span>
      <div className="ml-auto flex">
        <WinButton label="Minimieren">
          <Svg w={10} h={10}>
            <path d="M1 8h6" stroke="#000" strokeWidth="2" />
          </Svg>
        </WinButton>
        <WinButton label="Maximieren">
          <Svg w={10} h={10}>
            <path d="M.5 1.500h9v8h-9zM0 1h10" stroke="#000" />
          </Svg>
        </WinButton>
        <WinButton label="Schließen" className="ml-[2px]">
          <Svg w={10} h={10}>
            <path d="m1.500 1.500 7 7M8.500 1.500l-7 7" stroke="#000" strokeWidth="1.500" />
          </Svg>
        </WinButton>
      </div>
    </div>
  );
}

function AddressRow() {
  return (
    <div className="flex h-[30px] items-center pr-2 pl-[2px]">
      <div className="flex items-center gap-[3px] rounded-full bg-[#c3c1bc]">
        <IconButton label="Zurück">
          <BackButton />
        </IconButton>
        <IconButton label="Vorwärts">
          <ForwardButton />
        </IconButton>
      </div>
      <IconButton label="Verlauf" className="ml-[4px]">
        <Svg w={9} h={6}>
          <path d="M.5.5h8L4.500 5z" fill="#3f9ad0" stroke="#1b4f7e" />
        </Svg>
      </IconButton>
      <div className="ml-[7px] flex h-[22px] w-[434px] items-center border border-t-[#606060] border-l-[#606060] border-r-white border-b-white bg-white pl-[2px]">
        <SiTypo3 className="size-[17px] shrink-0 text-[#ff8700]" />
        <div
          role="textbox"
          aria-label="Adresse"
          className="ml-[2px] flex-1 pt-[2px] text-[11px] whitespace-nowrap text-[#808080]"
        >
          <span className="text-black">https</span>://www.<span className="text-black">uni-paderborn.de</span>
          /typo3/backend.php
        </div>
        <Lens />
        <button
          type="button"
          aria-label="Adressliste"
          className="flex h-5 w-4 items-center justify-center border border-t-white border-l-white border-r-[#404040] border-b-[#404040] bg-[#d4d0c8]"
        >
          <Caret />
        </button>
      </div>
      <IconButton
        label="Sicherheitsbericht"
        className="ml-[2px] flex h-[22px] w-[25px] items-center justify-center border border-[#7da2d6] bg-[#c7dbf7]"
      >
        <Padlock />
      </IconButton>
      <IconButton
        label="Aktualisieren"
        className="ml-1 flex h-[22px] w-[22px] items-center justify-center rounded-sm border border-[#b0aeaa] bg-[#f3f3f1]"
      >
        <Reload />
      </IconButton>
      <div className="ml-[5px] flex h-[22px] w-[198px] items-center border-t border-l border-white pl-[5px] text-[11px]">
        <SiTypo3 className="size-[17px] shrink-0 text-[#ff8700]" />
        <span className="ml-[3px] pt-[2px] whitespace-nowrap">Universität Paderborn [TYPO...</span>
        <button type="button" aria-label="Tab schließen" className="mr-[6px] ml-auto">
          <Svg w={9} h={9}>
            <path d="m1 1 7 7M8 1 1 8" stroke="#8b8a86" strokeWidth="2" />
          </Svg>
        </button>
      </div>
      <button
        type="button"
        aria-label="Neuer Tab"
        className="h-[22px] w-[29px] border border-t-white border-l-[#202020] border-r-[#202020] border-b-[#202020] bg-[#b9b5ad]"
      />
      <div className="ml-auto flex items-center gap-[9px] pt-1">
        <IconButton label="Startseite">
          <HomeOutline />
        </IconButton>
        <IconButton label="Favoriten">
          <StarShape />
        </IconButton>
        <IconButton label="Einstellungen">
          <GearOutline />
        </IconButton>
      </div>
    </div>
  );
}

function MenuBar() {
  return (
    <nav className="flex h-[21px] items-center gap-[15px] pt-[3px] pl-[7px] text-[11px]">
      {["Datei", "Bearbeiten", "Ansicht", "Favoriten", "Extras", "?"].map((t) => (
        <button type="button" key={t}>
          {t}
        </button>
      ))}
    </nav>
  );
}

function FavoritesBar() {
  return (
    <div className="flex h-[29px] items-center pt-[3px] pr-1 pl-1 text-[11px]">
      <IconButton label="Zu Favoriten hinzufügen">
        <FavAdd />
      </IconButton>
      <Favorite className="ml-2 w-[162px]" icon={<IePage />}>
        Relaunch - Demo [TYPO3 C...
      </Favorite>
      <Favorite className="ml-3 w-[152px]" icon={<SiTypo3 className="size-[17px] shrink-0 text-[#ff8700]" />}>
        TYPO3 Login Uni Paderborn
      </Favorite>
      <Favorite className="ml-[8px] w-[78px] whitespace-pre" icon={<OtrsIcon />}>
        {"OTRS  Login"}
      </Favorite>
      <Favorite className="ml-2 w-[131px]" icon={<StartpageIcon />}>
        Startpage Web Suchen
      </Favorite>
      <Favorite className="ml-2" icon={<TelekomIcon />}>
        E-Mail-Center-T-Online
      </Favorite>
      <div className="ml-auto flex items-center">
        <Chevrons />
        <IconButton label="Startseite" className="ml-[7px]">
          <HomeBlue />
        </IconButton>
        <Caret w={6} className="ml-[7px]" />
        <IconButton label="Feeds" className="ml-2">
          <RssIcon />
        </IconButton>
        <Caret w={6} color="#8b8883" className="ml-[9px]" />
        <IconButton label="E-Mail" className="ml-[9px]">
          <MailIcon />
        </IconButton>
        <IconButton label="Drucken" className="ml-[8px]">
          <PrinterIcon />
        </IconButton>
        <Caret w={6} className="ml-[7px]" />
        <button type="button" className="ml-[11px] flex items-center gap-1">
          Seite <Caret w={6} />
        </button>
        <button type="button" className="ml-[11px] flex items-center gap-1">
          Sicherheit <Caret w={6} />
        </button>
        <button type="button" className="ml-[10px] flex items-center gap-1">
          Extras <Caret w={6} />
        </button>
        <IconButton label="Hilfe" className="ml-[7px]">
          <HelpBlue />
        </IconButton>
        <Caret w={6} className="ml-[2px]" />
        <span className="ml-3">
          <Chevrons />
        </span>
      </div>
    </div>
  );
}

function Chevrons() {
  return (
    <Svg w={9} h={24}>
      <path d="m1 1.500 2.500 2.500L1 6.500M5 1.500 7.500 4 5 6.500" stroke="#000" strokeWidth="1.400" />
    </Svg>
  );
}

function TopBar() {
  return (
    <header className="flex h-[42px] items-start bg-gradient-to-b from-[#474747] to-[#353535] pr-6 pl-6 text-[12px] text-white">
      <a href="#" className="mt-[7px] flex items-center gap-[2px]">
        <SiTypo3 className="size-[25px] text-[#ff8700]" />
        <span className="mt-[2px] font-['Roboto_Condensed','Liberation_Sans_Narrow','Open_Sans',sans-serif] text-[20px] leading-7">
          TYPO3
        </span>
      </a>
      <div className="ml-auto flex items-start">
        <span className="mt-[12px] flex items-center gap-[2px] text-[11px] leading-4 font-bold">
          <UserGreen />
          <span className="pt-[2px]">Erika Mustermann</span>
        </span>
        <button type="button" className="mt-[10px] ml-3 h-5 w-[72px] rounded-xs border border-[#666] bg-[#3c3c3c]">
          Abmelden
        </button>
        <span className="mt-[6px] ml-[18px] h-[34px] w-[2px] border-r border-[#5d5d5d] bg-black" />
        <IconButton label="Lesezeichen" className="mt-[14px] ml-[18px]">
          <StarShape fill="#ffd53d" stroke="#dba021" />
        </IconButton>
        <span className="mt-[6px] ml-5 h-[30px] w-[2px] border-r border-[#5d5d5d] bg-black" />
        <div className="mt-[11px] ml-3 flex h-5 w-[205px] items-center gap-[2px] bg-white pl-1">
          <SearchGlass />
          <input
            type="text"
            aria-label="Suche"
            placeholder="Suchbegriff eingeben"
            className="h-5 min-w-0 flex-1 text-[12px] text-[#333] outline-none placeholder:text-[#808080]"
          />
        </div>
      </div>
    </header>
  );
}

function ModuleMenu() {
  return (
    <nav className="flex w-[189px] shrink-0 flex-col bg-[#ddd]">
      <div className="h-[49px] border-r border-b border-[#b3b3b3] pt-3">
        <MenuHead>WEB</MenuHead>
      </div>
      <a href="#" className="flex h-5 items-center border-b border-[#b3b3b3] bg-[#ebebeb] pl-6 text-[12px] font-bold text-[#222]">
        <span className="flex w-[26px]">
          <PageEdit />
        </span>
        Seite
      </a>
      <div className="flex-1 border-r border-[#b3b3b3]">
        <ul className="pt-px pb-2">
          <MenuItem icon={<Eye />}>Anzeigen</MenuItem>
          <MenuItem icon={<ListIcon />}>Liste</MenuItem>
          <MenuItem icon={<Wand />}>Funktionen</MenuItem>
          <MenuItem icon={<InfoIcon />}>Info</MenuItem>
          <MenuItem icon={<Trash />}>Papierkorb</MenuItem>
          <MenuItem icon={<Folder />}>News</MenuItem>
          <MenuItem icon={<FormIcon />}>Formhandler</MenuItem>
        </ul>
        <section className="border-t border-[#c0c0c0] pb-2">
          <MenuHead>DATEI</MenuHead>
          <ul>
            <MenuItem icon={<FileListIcon />}>Dateiliste</MenuItem>
          </ul>
        </section>
        <section className="border-t border-[#c0c0c0] pb-2">
          <MenuHead>BENUTZERWERKZEUGE</MenuHead>
          <ul>
            <MenuItem icon={<UserConfig />}>Einstellungen</MenuItem>
          </ul>
        </section>
        <section className="border-t border-[#c0c0c0]">
          <MenuHead>HILFE</MenuHead>
          <ul>
            <MenuItem icon={<Book />}>Dokumentation</MenuItem>
            <MenuItem icon={<Book />}>Über TYPO3</MenuItem>
            <MenuItem icon={<Book blue />}>TYPO3-Handbuch</MenuItem>
          </ul>
        </section>
      </div>
    </nav>
  );
}

function DocHeader() {
  return (
    <>
      <div className="flex h-[27px] bg-[#585858]">
        <div className="flex w-[184px] shrink-0 items-center pt-[7px] pr-[18px] pl-[15px]">
          <IconButton label="Neue Seite">
            <PageAdd />
          </IconButton>
          <IconButton label="Filter" className="ml-2">
            <Funnel />
          </IconButton>
          <IconButton label="Baum aktualisieren" className="ml-auto">
            <RefreshGreen />
          </IconButton>
        </div>
        <div className="flex flex-1 items-center pr-6 pl-[25px] text-[12px] text-[#ddd]">
          <IconButton label="Hilfe">
            <HelpGrey />
          </IconButton>
          <span className="ml-auto flex items-center">
            Pfad:<b className="ml-2">/Demo/</b>
            <span className="mr-[5px] ml-[11px]">
              <PageWhite />
            </span>
            <b>Seite 1 [62042]</b>
          </span>
        </div>
      </div>
      <div className="flex h-[22px] items-center bg-[#dadada] pt-[2px] pr-[27px] pl-[209px]">
        <IconButton label="Schließen">
          <CloseBox />
        </IconButton>
        <IconButton label="Speichern" className="ml-[14px]">
          <Save />
        </IconButton>
        <IconButton label="Speichern und anzeigen" className="ml-[5px]">
          <Save kind="view" />
        </IconButton>
        <IconButton label="Speichern und schließen" className="ml-[6px]">
          <Save kind="close" />
        </IconButton>
        <IconButton label="Speichern und neu" className="ml-[7px]">
          <Save kind="new" />
        </IconButton>
        <IconButton label="Löschen" className="ml-[11px]">
          <Trash />
        </IconButton>
        <IconButton label="Rückgängig" className="ml-[7px]">
          <UndoGreen />
        </IconButton>
        <IconButton label="Lesezeichen anlegen" className="ml-auto">
          <StarAdd />
        </IconButton>
        <IconButton label="In neuem Fenster öffnen" className="ml-2">
          <Expand />
        </IconButton>
      </div>
    </>
  );
}

function PageTree() {
  return (
    <aside className="w-[184px] shrink-0 border-r border-[#d2d2d2] bg-[#ebebeb] pt-[37px] text-[12px] text-black">
      <ul>
        <li className="flex h-5 items-center pl-[17px]">
          <SiTypo3 className="size-4 shrink-0 text-[#808080]" />
          <a href="#" className="ml-1 pt-px whitespace-nowrap">
            Universität Paderborn
          </a>
        </li>
        <TreeRow lines={["openTop"]}>Demo</TreeRow>
        <TreeRow lines={["", "open"]} selected>
          Seite 1
        </TreeRow>
        <TreeRow lines={["", "pass", "tee"]}>Seite 1a</TreeRow>
        <TreeRow lines={["", "pass", "end"]}>Seite 1b</TreeRow>
        <TreeRow lines={["", "tee"]}>Seite 2</TreeRow>
        <TreeRow lines={["", "tee"]}>Seite 3</TreeRow>
        <TreeRow lines={["", "tee"]}>Seite 4</TreeRow>
        <TreeRow lines={["", "end"]}>Seite 5</TreeRow>
      </ul>
    </aside>
  );
}

function Tabs() {
  return (
    <div role="tablist" className="relative flex h-[30px] gap-px text-[12px] text-[#707070]">
      <button
        type="button"
        role="tab"
        aria-selected="true"
        className="w-[101px] rounded-t-xs border border-b-0 border-[#ababab] bg-white pl-[10px] text-left text-black"
      >
        Allgemein
      </button>
      <button
        type="button"
        role="tab"
        aria-selected="false"
        className="w-[77px] rounded-t-xs border border-[#ababab] bg-[#dadada] pt-px pl-[10px] text-left"
      >
        Bilder
      </button>
      <button
        type="button"
        role="tab"
        aria-selected="false"
        className="w-[107px] rounded-t-xs border border-[#ababab] bg-[#dadada] pt-px pl-[10px] text-left"
      >
        Kategorien
      </button>
    </div>
  );
}

function Editor() {
  const rows = ["Zeile 1", "Zeile 2"];
  const cols = ["Spalte 1", "Spalte 2", "Spalte 3", "Spalte 4"];
  return (
    <div className="mt-[14px] mr-2 ml-[13px] flex flex-1 flex-col border border-b-0 border-[#c0c0c0] bg-white">
      <div role="toolbar" className="border-b border-[#c0c0c0] bg-[#cbd8e8] pt-[2px] pl-[2px]">
        <div className="flex h-[22px] items-center">
          <div className="relative h-[22px] w-[200px] shrink-0 border border-[#b5b8c8] bg-white">
            <select
              aria-label="Blockformat"
              className="block h-5 w-full appearance-none bg-white pl-[3px] text-[12px] text-black outline-none"
            >
              <option>Kein Blockformat</option>
            </select>
            <span className="pointer-events-none absolute inset-y-0 right-0 flex w-4 items-center justify-center border-l border-[#b5b8c8] bg-[#f0f0f0]">
              <Svg w={9} h={6}>
                <path d="m.5 0 4 3 4-3v2l-4 4-4-4z" fill="#444" />
              </Svg>
            </span>
          </div>
          <Tool label="Fett">
            <span className="font-['DejaVu_Serif',serif] text-[15px] font-black">B</span>
          </Tool>
          <Tool label="Kursiv">
            <span className="font-['DejaVu_Serif',serif] text-[14px] font-bold italic">I</span>
          </Tool>
          <Sep className="w-[9px]" />
          <Tool label="Nummerierte Liste">
            <ListLines ordered />
          </Tool>
          <Tool label="Aufzählung">
            <ListLines />
          </Tool>
          <Sep />
          <Tool label="Link einfügen" faded>
            <GlobeLink />
          </Tool>
          <Tool label="Tabelle einfügen">
            <Grid />
          </Tool>
          <Tool label="Sonderzeichen">
            <Omega />
          </Tool>
          <Tool label="Tiefgestellt">
            <span className="text-[11px] font-bold">
              x<sub className="text-[8px]">2</sub>
            </span>
          </Tool>
          <Tool label="Hochgestellt">
            <span className="text-[11px] font-bold">
              x<sup className="text-[8px]">2</sup>
            </span>
          </Tool>
          <Sep />
          <Tool label="Suchen und ersetzen">
            <Binoculars />
          </Tool>
          <Sep />
          <Tool label="Rückgängig">
            <Arrow />
          </Tool>
          <Tool label="Wiederholen">
            <Arrow flip faded />
          </Tool>
          <Tool label="Formatierung entfernen">
            <Broom />
          </Tool>
        </div>
        <div className="mt-[5px] mb-[6px] flex h-[22px] items-center">
          <Tool label="Rahmen umschalten">
            <SideGrid />
          </Tool>
          <Sep />
          <Tool label="Tabelleneigenschaften" active>
            <Grid head="#4a74c8" body="#e8606a" line="#c9909c" frame="#7a4a6c" />
          </Tool>
          <Sep />
          <Tool label="Zeileneigenschaften" faded>
            <RowProps />
          </Tool>
          <button
            type="button"
            aria-label="Zeile oben einfügen"
            title="Zeile oben einfügen"
            className="flex h-[22px] w-6 shrink-0 items-center justify-center border border-[#dde6f1] bg-[#d2ddeb]"
          >
            <span className="opacity-35">
              <RowInsert />
            </span>
          </button>
          <Tool label="Zeile unten einfügen" faded>
            <RowInsert low />
          </Tool>
          <Tool label="Zeile löschen" faded>
            <RowDelete />
          </Tool>
          <Tool label="Zeile teilen" faded>
            <RowSplit />
          </Tool>
          <Sep />
          <Tool label="Spalteneigenschaften" faded>
            <ColProps />
          </Tool>
          <Tool label="Spalte links einfügen" faded>
            <ColInsert />
          </Tool>
          <Tool label="Spalte rechts einfügen" faded>
            <ColInsert dx={1} />
          </Tool>
          <Tool label="Spalte löschen" faded>
            <ColDelete />
          </Tool>
          <Tool label="Spalte teilen" faded>
            <SideGrid />
          </Tool>
          <Sep />
          <Tool label="Zelleneigenschaften" faded>
            <CellProps />
          </Tool>
          <Tool label="Zelle davor einfügen" faded>
            <CellOp mode={0} />
          </Tool>
          <Tool label="Zelle danach einfügen" faded>
            <CellOp mode={1} />
          </Tool>
          <Tool label="Zelle löschen" faded>
            <CellOp mode={2} />
          </Tool>
          <Tool label="Zelle teilen" faded>
            <SideGrid />
          </Tool>
          <Tool label="Zellen verbinden" faded>
            <MergeCells />
          </Tool>
        </div>
      </div>
      <div className="relative flex-1 pt-[7px] pl-[6px] text-[12px] leading-[14px]">
        <span className="absolute top-[6px] left-[6px] h-[15px] w-px bg-black" />
        <table className="border-collapse">
          <tbody>
            {rows.map((r) => (
              <tr key={r}>
                {cols.map((c) => (
                  <td key={c} className="w-[54px] p-0 pb-[5px] whitespace-nowrap">
                    {r}
                    <br />
                    {c}
                  </td>
                ))}
              </tr>
            ))}
          </tbody>
        </table>
      </div>
    </div>
  );
}

function EditForm() {
  return (
    <main className="flex min-w-0 flex-1 flex-col bg-white pt-[27px] pr-6 pl-6 text-black">
      <h1 className="font-['Roboto_Condensed','Liberation_Sans_Narrow','Open_Sans',sans-serif] text-[28px] leading-7 whitespace-nowrap text-[#555]">
        Seiteninhalt "Überschrift" auf Seite "Seite 1" bearbeiten
      </h1>
      <form className="mt-[30px] flex flex-1 flex-col">
        <Tabs />
        <div className="-mt-px flex flex-1 flex-col border border-b-0 border-[#ababab] bg-[#ebebeb] bg-[linear-gradient(#ffffff,#ebebeb_100px)] text-[12px] leading-4">
          <SectionTitle>Inhaltselement</SectionTitle>
          <div className="mt-4 flex gap-[34px] pb-[23px] pl-[11px]">
            <div className="w-[175px]">
              <label htmlFor="ctype">Typ</label>
              <WinSelect id="ctype" value="UPB Content - Text" className="mt-[18px] w-[175px]" />
            </div>
            <div className="w-[110px]">
              <label htmlFor="column">Spalte</label>
              <WinSelect id="column" value="Inhalt" className="mt-[18px] w-[110px]" />
            </div>
            <div className="w-[81px]">
              <label htmlFor="language">Sprache</label>
              <WinSelect id="language" value="Standard" className="mt-[18px] w-[81px]" />
            </div>
          </div>
          <SectionRule />
          <SectionTitle>Überschrift</SectionTitle>
          <div className="mt-4 pr-[39px] pb-6 pl-[10px]">
            <label htmlFor="header" className="block pl-px">
              Überschrift
            </label>
            <input
              id="header"
              type="text"
              defaultValue="Überschrift"
              className="mt-[13px] block h-[23px] w-full rounded-xs border border-[#7c7c7c] bg-white pl-[6px] text-[12px] leading-[21px] text-[#444] outline-none"
            />
            <label htmlFor="layout" className="mt-[21px] block pl-px">
              Typ
            </label>
            <WinSelect id="layout" value="Standard" className="mt-[18px] ml-px w-[104px]" />
          </div>
          <SectionRule />
          <SectionTitle>Text</SectionTitle>
          <Editor />
        </div>
      </form>
    </main>
  );
}

function ScrollBar() {
  return (
    <div aria-hidden="true" className="flex w-4 shrink-0 flex-col items-center bg-[#f0f0f0] pt-[17px] pb-[17px]">
      <Svg w={12} h={8}>
        <path d="m1.500 6.500 4.500-4.500 4.500 4.500" stroke="#505050" strokeWidth="2.200" />
      </Svg>
      <div className="mt-[9px] w-[14px] flex-[331] bg-[#cdcdcd]" />
      <div className="flex-[233]" />
      <Svg w={12} h={8}>
        <path d="M1.500 1.500 6 6l4.500-4.500" stroke="#505050" strokeWidth="2.200" />
      </Svg>
    </div>
  );
}

function StatusBar() {
  return (
    <footer className="flex h-5 items-center justify-end pt-[2px] text-[11px]">
      <button
        type="button"
        className="flex h-[18px] w-[70px] items-center border-t border-l border-[#808080] pl-[5px]"
      >
        <ZoomIcon />
        <span className="ml-[2px] pt-[2px]">100%</span>
        <Caret w={6} className="ml-auto" />
      </button>
      <span className="flex h-[18px] w-[22px] items-end justify-end border-t border-[#808080]">
        <Svg w={12} h={12}>
          <path d="M1 12 12 1M5 12l7-7M9 12l3-3" stroke="#808080" strokeWidth="1.500" />
        </Svg>
      </span>
    </footer>
  );
}

export default function App() {
  return (
    <div className="flex min-h-screen flex-col bg-[#d4d0c8] p-1 font-['DejaVu_Sans',Verdana,sans-serif] text-black shadow-[inset_-1px_-1px_#404040,inset_1px_1px_#d4d0c8,inset_-2px_-2px_#808080,inset_2px_2px_#fff]">
      <div className="font-['DejaVu_Sans_Condensed',Tahoma,'Liberation_Sans',sans-serif]">
        <TitleBar />
        <AddressRow />
        <ChromeLine />
        <MenuBar />
        <ChromeLine />
        <FavoritesBar />
      </div>
      <TopBar />
      <div className="flex flex-1">
        <ModuleMenu />
        <div className="flex min-w-0 flex-1 flex-col">
          <DocHeader />
          <div className="flex flex-1">
            <PageTree />
            <EditForm />
            <ScrollBar />
          </div>
        </div>
      </div>
      <div className="font-['DejaVu_Sans_Condensed',Tahoma,'Liberation_Sans',sans-serif]">
        <StatusBar />
      </div>
    </div>
  );
}
